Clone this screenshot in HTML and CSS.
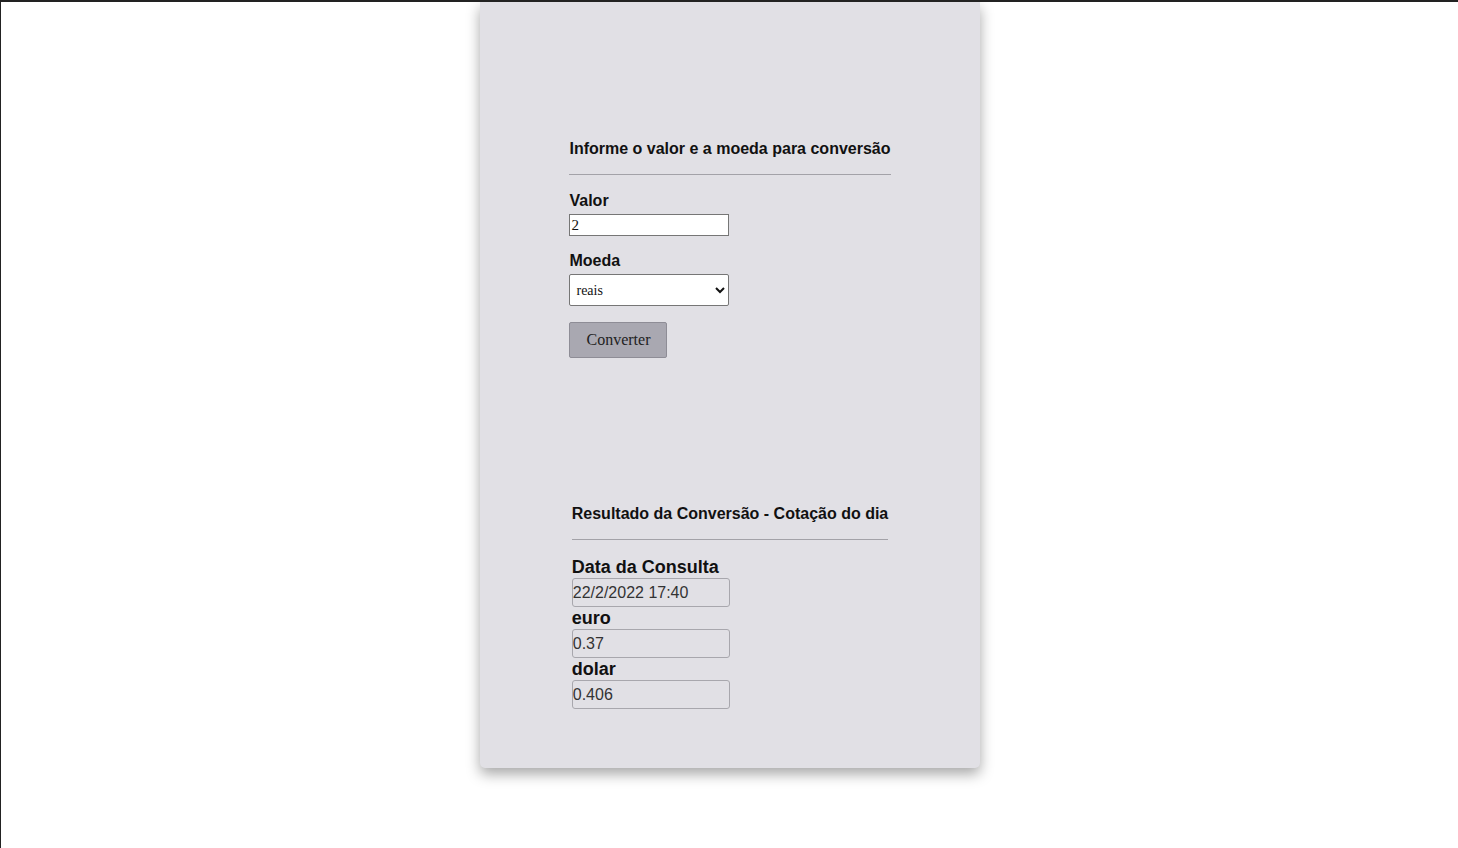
FILE: index.html
```html
<!DOCTYPE html>
<html lang="pt-BR">
<head>
<meta charset="utf-8">
<title>Conversor de moedas</title>
<link rel="stylesheet" href="styles.css">
</head>
<body>
<main class="card">
  <form class="section">
    <h2 class="title">Informe o valor e a moeda para conversão</h2>
    <div class="rule"></div>
    <label class="label" for="valor">Valor</label>
    <input class="field" id="valor" type="text" value="2">
    <label class="label label-gap" for="moeda">Moeda</label>
    <select class="select" id="moeda">
      <option>reais</option>
      <option>euro</option>
      <option>dolar</option>
    </select>
    <button class="btn" type="button">Converter</button>
  </form>

  <section class="section result">
    <h2 class="title">Resultado da Conversão - Cotação do dia</h2>
    <div class="rule"></div>
    <div class="res-label first">Data da Consulta</div>
    <input class="res-field" type="text" value="22/2/2022 17:40" readonly>
    <div class="res-label">euro</div>
    <input class="res-field" type="text" value="0.37" readonly>
    <div class="res-label">dolar</div>
    <input class="res-field" type="text" value="0.406" readonly>
  </section>
</main>
</body>
</html>
```

FILE: styles.css
```css
html {
  border-top: 2px solid #222;
  border-left: 1px solid #222;
  background: #fff;
}
body {
  margin: 0;
  padding: 0 0 80px 1px;
  font-family: "Liberation Sans", Arial, sans-serif;
  color: #111;
}
.card {
  width: 500px;
  height: 766px;
  box-sizing: border-box;
  margin: 0 auto;
  padding: 138px 0 0;
  background: #e1e0e5;
  border-radius: 0 0 5px 5px;
  box-shadow: 0 6px 14px rgba(0, 0, 0, 0.35);
  display: flex;
  flex-direction: column;
  align-items: center;
}
.section {
  display: flex;
  flex-direction: column;
  align-items: flex-start;
  width: max-content;
  margin: 0;
}
.title {
  margin: 0;
  font-size: 16px;
  line-height: 18px;
  font-weight: bold;
  color: #111;
}
.rule {
  align-self: stretch;
  height: 0;
  border-top: 1px solid #a3a2a8;
  margin-top: 16px;
}
.label {
  margin-top: 17px;
  font-size: 16px;
  line-height: 18px;
  font-weight: bold;
}
.label-gap {
  margin-top: 16px;
}
.field {
  margin-top: 4px;
  width: 160px;
  height: 22px;
  box-sizing: border-box;
  border: 1px solid #767676;
  padding: 0 1px;
  font-family: "Liberation Serif", "Times New Roman", serif;
  font-size: 15px;
  color: #111;
  background: #fff;
  outline: none;
}
.select {
  margin-top: 4px;
  width: 160px;
  height: 32px;
  box-sizing: border-box;
  border: 1px solid #767676;
  border-radius: 2px;
  padding: 0 2px;
  font-family: "Liberation Serif", "Times New Roman", serif;
  font-size: 14px;
  color: #111;
  background: #fff;
}
.btn {
  margin-top: 16px;
  width: 98px;
  height: 36px;
  box-sizing: border-box;
  border: 1px solid #8e8d96;
  border-radius: 2px;
  background: #a9a8b1;
  font-family: "Liberation Serif", "Times New Roman", serif;
  font-size: 16px;
  color: #222;
  padding: 0;
}
.result {
  margin-top: 147px;
}
.res-label {
  font-size: 18px;
  line-height: 19px;
  padding-top: 2px;
  font-weight: bold;
  color: #111;
}
.res-label.first {
  margin-top: 17px;
  padding-top: 1px;
}
.res-field {
  margin-top: 1px;
  width: 158px;
  height: 29px;
  box-sizing: border-box;
  border: 1px solid #a8a7ad;
  border-radius: 3px;
  background: transparent;
  padding: 0;
  font-family: "Liberation Sans", Arial, sans-serif;
  font-size: 16px;
  color: #333;
  outline: none;
}
```
